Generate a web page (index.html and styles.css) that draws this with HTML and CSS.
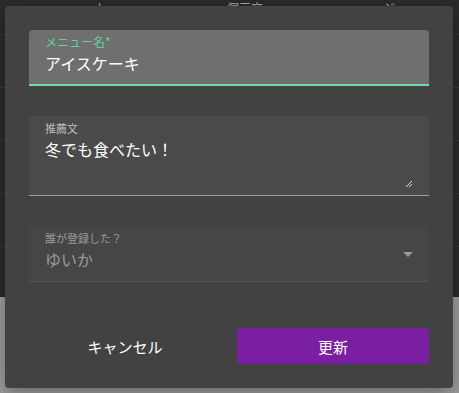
FILE: index.html
```html
<!DOCTYPE html>
<html lang="ja">
<head>
    <meta charset="UTF-8">
    <meta name="viewport" content="width=device-width, initial-scale=1.0">
    <title>メニュー編集</title>
    <link rel="stylesheet" href="styles.css">
</head>
<body>
    <div class="backdrop">
        <div class="backdrop-top">
            <div class="bg-row bg-head">
                <span>ト</span><span>個三文</span><span>ジ</span>
            </div>
            <div class="bg-row"></div>
            <div class="bg-row"></div>
            <div class="bg-row"></div>
            <div class="bg-row"></div>
        </div>
        <div class="backdrop-bottom"></div>
    </div>

    <div class="dialog">
        <div class="field field-active">
            <label class="field-label">メニュー名*</label>
            <div class="field-value">アイスケーキ</div>
        </div>

        <div class="field field-area">
            <label class="field-label">推薦文</label>
            <div class="field-value">冬でも食べたい！</div>
            <svg class="resize" width="8" height="8" viewBox="0 0 8 8">
                <path d="M1 7 L7 1 M4 7 L7 4" stroke="#ddd" stroke-width="1"/>
            </svg>
        </div>

        <div class="field field-disabled">
            <label class="field-label">誰が登録した？</label>
            <div class="field-value">ゆいか</div>
            <span class="arrow"></span>
        </div>

        <div class="actions">
            <button class="btn btn-text">キャンセル</button>
            <button class="btn btn-primary">更新</button>
        </div>
    </div>
</body>
</html>
```

FILE: styles.css
```css
/* Base */
body {
    margin: 0;
    font-family: "Noto Sans CJK JP", "Noto Sans", sans-serif;
    background-color: #2b2b2b;
    color: #fff;
    overflow: hidden;
}

/* Page behind the dialog */
.backdrop-top {
    height: 297px;
    background-color: #2b2b2b;
}

.bg-row {
    height: 52px;
    border-bottom: 1px solid #3a3a3a;
}

.bg-head {
    height: 34px;
    display: flex;
    gap: 120px;
    padding-left: 95px;
    font-size: 12px;
    line-height: 16px;
    color: #aaa;
}

.backdrop-bottom {
    height: 96px;
    background-color: #9e9e9e;
}

/* Dialog */
.dialog {
    position: absolute;
    left: 5px;
    top: 6px;
    width: 448px;
    height: 382px;
    box-sizing: border-box;
    padding: 24px 24px 0;
    background-color: #424242;
    border-radius: 4px;
    box-shadow: 0 6px 20px rgba(0, 0, 0, 0.35);
    display: flex;
    flex-direction: column;
}

/* Fields */
.field {
    position: relative;
    box-sizing: border-box;
    padding: 4px 16px 0;
    border-radius: 4px 4px 0 0;
    background-color: #4a4a4a;
    border-bottom: 1px solid #9e9e9e;
}

.field-label {
    display: block;
    font-size: 11px;
    line-height: 16px;
    color: #bdbdbd;
}

.field-value {
    font-size: 16px;
    line-height: 26px;
    color: #fff;
}

.field-active {
    height: 56px;
    background-color: #6f6f6f;
    border-bottom: 2px solid #69e0a5;
}

.field-active .field-label {
    color: #5fd39a;
    font-size: 12px;
}

.field-area {
    height: 80px;
    margin-top: 30px;
}

.resize {
    position: absolute;
    right: 16px;
    bottom: 7px;
}

.field-disabled {
    height: 56px;
    margin-top: 30px;
    background-color: #464646;
    border-bottom: 1px solid #555;
}

.field-disabled .field-label {
    color: #9a9a9a;
}

.field-disabled .field-value {
    color: #9a9a9a;
}

.arrow {
    position: absolute;
    right: 16px;
    top: 26px;
    border-left: 5px solid transparent;
    border-right: 5px solid transparent;
    border-top: 5px solid #9a9a9a;
}

/* Buttons */
.actions {
    display: flex;
    gap: 16px;
    margin-top: 46px;
}

.btn {
    flex: 1;
    height: 36px;
    border: none;
    border-radius: 4px;
    font-family: inherit;
    font-size: 15px;
    font-weight: 400;
    color: #fff;
    cursor: pointer;
}

.btn-text {
    background: transparent;
}

.btn-primary {
    background-color: #7b1fa2;
}
```
